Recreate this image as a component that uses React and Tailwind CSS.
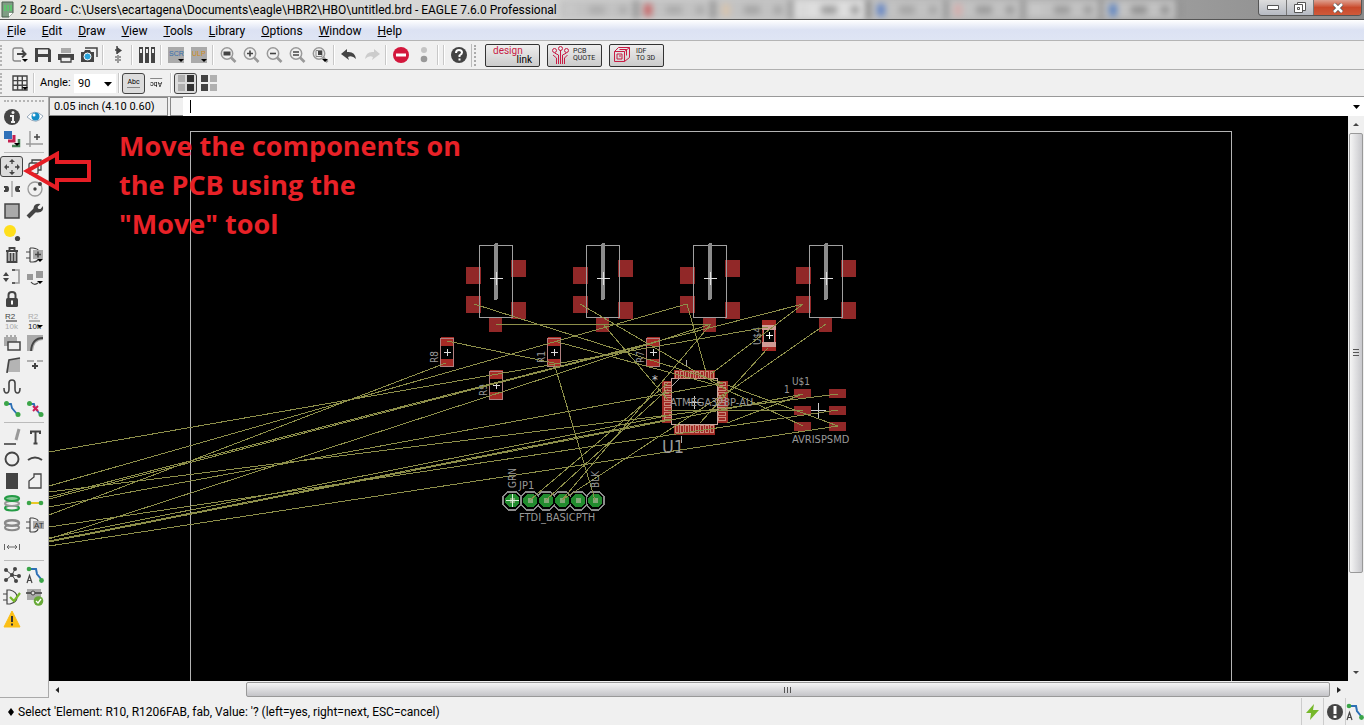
import React from "react";

const INK = "#444";

function Icon({ children, size = 18 }) {
  return (
    <svg width={size} height={size} viewBox="0 0 18 18" fill="none" stroke={INK} strokeWidth="1.6" className="shrink-0 overflow-visible" aria-hidden="true">
      {children}
    </svg>
  );
}

const Drop = () => <path d="M11 13h6l-3 3z" fill="#000" stroke="none" />;

const Lens = ({ children }) => (
  <Icon>
    <circle cx="8" cy="7.500" r="5.700" stroke="#999" strokeWidth="1.500" />
    <path d="M12 11.500l4.500 4.500" stroke="#999" strokeWidth="2.600" />
    {children}
  </Icon>
);

const Nodes = ({ children }) => (
  <Icon>
    <path d="M3 4h5l1 4 5 6" stroke="#2c6fb5" strokeWidth="1.800" />
    <circle cx="3.500" cy="3.500" r="2.500" fill="#3ba548" stroke="none" />
    <circle cx="15" cy="14.500" r="2.500" fill="#3ba548" stroke="none" />
    {children}
  </Icon>
);

const RouteA = () => (
  <Icon>
    <path d="M3 3h7l1 5 4 5" stroke="#2c6fb5" strokeWidth="2" />
    <circle cx="3" cy="3" r="2.300" fill="#3ba548" stroke="none" />
    <circle cx="15.500" cy="14.500" r="2.400" fill="#3ba548" stroke="none" />
    <path d="M1 17L3.500 9.500 6 17M2 14.500h3" strokeWidth="1.200" />
  </Icon>
);

const I = {
  open: <Icon><path d="M12 5V4q0-2-2-2H4Q2 2 2 4v9q0 2 2 2h6" stroke="#888" strokeWidth="1.300" /><path d="M6 8h8M11 4.500L14.500 8 11 11.500" strokeWidth="2" /><Drop /></Icon>,
  save: <Icon><path d="M1 2h14l2 2v12H1z" fill={INK} stroke="none" /><path d="M4 3.500h10V8H4zM4 11h10v5H4z" fill="#eee" stroke="none" /></Icon>,
  print: <Icon><path d="M4 2h10v5H4z" fill="#aaa" stroke="none" /><path d="M1 8h16v6H1z" fill={INK} stroke="none" /><path d="M4 11h10v5H4z" fill="#eee" strokeWidth="1.300" /></Icon>,
  cam: <Icon><path d="M5 2h12v9" strokeWidth="1.500" /><path d="M1 6h3l1-2h5l1 2h3v10H1z" fill={INK} stroke="none" /><circle cx="7.500" cy="10.500" r="3.500" fill="#2aa5dc" stroke="#fff" strokeWidth="1" /></Icon>,
  sch: <Icon><path d="M8 0v8M6 4h3" strokeWidth="1.500" /><path d="M8 1l5 3.500L8 8z" fill={INK} stroke="none" /><path d="M9 9v8M6 11h6M6 14h6" stroke="#999" strokeWidth="2" /></Icon>,
  lib: <Icon>{[1, 7, 13].map((x) => <g key={x}><path d={`M${x} 1h4v16h-4z`} fill={INK} stroke="none" /><path d={`M${x + 1} 3h2v4h-2z`} fill="#eee" stroke="none" /></g>)}</Icon>,
  scr: <Icon><path d="M1 1h16v16H1z" fill="#aaa" stroke="none" /><text x="2" y="10" fontSize="7" fill="#3670ad" stroke="none" fontFamily="Liberation Sans, sans-serif">SCR</text><Drop /></Icon>,
  ulp: <Icon><path d="M1 1h16v16H1z" fill="#aaa" stroke="none" /><text x="2" y="10" fontSize="7" fill="#d08a20" stroke="none" fontFamily="Liberation Sans, sans-serif">ULP</text><Drop /></Icon>,
  fit: <Lens><path d="M4.500 5.500h7v4h-7z" fill={INK} stroke="none" /></Lens>,
  plus: <Lens><path d="M5 7.500h6M8 4.500v6" /></Lens>,
  minus: <Lens><path d="M5 7.500h6" /></Lens>,
  redraw: <Lens><path d="M5 6h6M5 9h6" strokeWidth="1.300" /></Lens>,
  select: <Lens><path d="M5 4.500h6v6H5z" stroke="#888" strokeWidth="1" /><path d="M7 5h4v4H7z" fill={INK} stroke="none" /><Drop /></Lens>,
  undo: <Icon><path d="M1 8l6-5v3q8-1 9 7-4-4-8-2l1 3z" fill={INK} stroke="none" /></Icon>,
  redo: <Icon><path d="M17 8l-6-5v3q-8-1-9 7 4-4 8-2l-1 3z" fill="#ccc" stroke="none" /></Icon>,
  stop: <Icon><circle cx="9" cy="9" r="8" fill="#d3173c" stroke="none" /><path d="M4 9h10" stroke="#fff" strokeWidth="3" /></Icon>,
  go: <Icon><circle cx="9" cy="4" r="3" fill="#c4c4c4" stroke="none" /><circle cx="9" cy="13" r="3.300" fill="#999" stroke="none" /></Icon>,
  help: <Icon><circle cx="9" cy="9" r="8" fill={INK} stroke="none" /><path d="M6 7q0-3 3-3t3 2.500Q12 8 9.500 9.500V11M9.500 12.500v2" stroke="#fff" strokeWidth="2" /></Icon>,
  grid: <Icon><path d="M2 2h14v14H2zM2 6.600h14M2 11.300h14M6.600 2v14M11.300 2v14" strokeWidth="1.400" /><Drop /></Icon>,
  info: <Icon><circle cx="9" cy="9" r="8" fill={INK} stroke="none" /><path d="M7 8h3v6M8 14h4" stroke="#eee" strokeWidth="2" /><circle cx="10" cy="4.500" r="1.500" fill="#eee" stroke="none" /></Icon>,
  eye: <Icon><path d="M1 9q7-9 16-1-6 10-16 1z" fill="#fff" stroke="#9ab" strokeWidth="1" /><circle cx="9.500" cy="8.500" r="4" fill="#148ec8" stroke="none" /><circle cx="8" cy="7" r="1.500" fill="#fff" stroke="none" /></Icon>,
  layers: <Icon><path d="M1 1h8v8H1z" fill="#2e70b8" stroke="none" /><path d="M11 5v6H5" stroke="#c4204f" strokeWidth="3" /><path d="M16 9v7H9" stroke="#438254" strokeWidth="2.500" /><Drop /></Icon>,
  mark: <Icon><path d="M4 1v16M0 14h17" stroke="#999" strokeWidth="1.400" /><path d="M8 7h6M11 4v6" strokeWidth="1.500" /></Icon>,
  move: <Icon><path d="M9 1l3 3H6zM9 17l3-3H6zM1 9l3-3v6zM17 9l-3-3v6z" fill={INK} stroke="none" /><path d="M9 4v2M9 12v2M4 9h2M12 9h2" strokeWidth="1.300" /></Icon>,
  copy: <Icon><rect x="3" y="5" width="9" height="11" rx="1.500" strokeWidth="1.300" /><path d="M6 5V2h9v10h-3" strokeWidth="1.300" /></Icon>,
  mirror: <Icon><path d="M9 1v16" stroke="#999" strokeWidth="1.200" /><path d="M1 6h3q2 0 2 3t-2 3H1zM17 6h-3q-2 0-2 3t2 3h3z" fill={INK} stroke="none" /><path d="M0 8h2v2H0zM16 8h2v2h-2z" fill="#eee" stroke="none" /></Icon>,
  rotate: <Icon><circle cx="9" cy="9" r="7" stroke="#999" strokeWidth="1.300" /><circle cx="9" cy="9" r="1.700" fill={INK} stroke="none" /><circle cx="14" cy="4" r="2" fill={INK} stroke="none" /></Icon>,
  group: <Icon><path d="M2 2h14v14H2z" fill="#aaa" strokeWidth="1.500" /></Icon>,
  wrench: <Icon><path d="M2 15l7-7" strokeWidth="4" /><path d="M14.500 2l-3 3 1 2 2 0 2.500-3q1 6-5 6.500Q7 11 7.500 6 8.500 1 14.500 2z" fill={INK} stroke="none" /></Icon>,
  paint: <Icon><circle cx="7" cy="7" r="6" fill="#ffdf1c" stroke="none" /><circle cx="14.500" cy="14.500" r="2.600" fill={INK} stroke="none" /></Icon>,
  trash: <Icon><path d="M3 5h12M6.500 4V2h5v2M4.500 6v10h9V6M7.500 7v8M10.500 7v8" strokeWidth="1.900" /></Icon>,
  add: <Icon><path d="M7 4h10v9H7z" fill="#aaa" stroke="none" /><path d="M4 2h3q5 1 5 2M4 16h3q3 0 5-2M4 2v14M0 6h4M0 12h4" strokeWidth="1.200" /><path d="M9 8.500h6M12 5.500v6" strokeWidth="1.500" /><Drop /></Icon>,
  pin: <Icon><path d="M0 8l3-4 3 4zM0 10l3 4 3-4z" fill={INK} stroke="none" /><path d="M9 2h7v13H9" stroke="#999" /><path d="M9 2h3M9 15h3" /></Icon>,
  replace: <Icon><path d="M1 6h6v6H1zM10 3h7v7h-7z" fill="#999" stroke="none" /><path d="M5 14q3 4 7 1" strokeWidth="1.200" /><Drop /></Icon>,
  lock: <Icon><rect x="3" y="8" width="12" height="9" rx="1.500" fill={INK} stroke="none" /><path d="M5.500 9V5q0-3 3.500-3t3.500 3v4" strokeWidth="2" /><path d="M9 10.500v4" stroke="#fff" strokeWidth="2" /></Icon>,
  name: <Icon><text x="2" y="7" fontSize="8" fill="#444" stroke="none" fontFamily="Liberation Sans, sans-serif">R2</text><path d="M3 9h11" strokeWidth="1.200" /><text x="2" y="17" fontSize="8" fill="#aaa" stroke="none" fontFamily="Liberation Sans, sans-serif">10k</text></Icon>,
  value: <Icon><text x="2" y="7" fontSize="8" fill="#aaa" stroke="none" fontFamily="Liberation Sans, sans-serif">R2</text><path d="M3 9h11" stroke="#888" strokeWidth="1.200" /><text x="2" y="17" fontSize="8" fill="#222" stroke="none" fontFamily="Liberation Sans, sans-serif">10k</text><Drop /></Icon>,
  smash: <Icon><path d="M1 3h2V1h2v2h2V1h2v2h2V1h2v2h1v9H1z" fill="#aaa" stroke="none" /><path d="M5 8h12v8H5z" fill="#eee" strokeWidth="1.500" /></Icon>,
  miter: <Icon><path d="M1 1h16v5Q8 6 7 17H1z" fill="#aaa" stroke="none" /><path d="M5 17Q6 4 17 4" strokeWidth="1.800" /></Icon>,
  split: <Icon><path d="M5 4l12-2v14H3z" fill="#b4b4b4" stroke="none" /><path d="M4 17L6 4l11-2" strokeWidth="1.600" /></Icon>,
  opt: <Icon><path d="M1 5h7M11 5h6" stroke="#999" strokeWidth="1.300" /><path d="M9 7v6M6 10h6" strokeWidth="2" /></Icon>,
  meander: <Icon><path d="M1 10q0 5 2.500 5T6 11V5q0-3 3-3t3 3v6q0 4 2.500 4T17 10" strokeWidth="1.600" /></Icon>,
  route: <Nodes />,
  ripup: <Nodes><path d="M7 6l5 5M12 6l-5 5" stroke="#d01f57" strokeWidth="2" /></Nodes>,
  wire: <Icon><path d="M1 16h12" strokeWidth="1.600" /><path d="M16 1l-3 11" stroke="#999" strokeWidth="3" /></Icon>,
  text: <Icon><path d="M5 6V3.500h9V6M9.500 3v13M7.500 15.500h4" strokeWidth="2" /></Icon>,
  circle: <Icon><circle cx="9" cy="9" r="6.500" strokeWidth="1.900" /></Icon>,
  arc: <Icon><path d="M2 10q7-5 14 0" strokeWidth="2" /></Icon>,
  rect: <Icon><path d="M3 1h12v16H3z" fill={INK} stroke="none" /></Icon>,
  poly: <Icon><path d="M3 16h12V2H8v3L3 9z" strokeWidth="1.300" /></Icon>,
  via: <Icon><ellipse cx="9" cy="14" rx="7" ry="2.500" stroke="#249b45" strokeWidth="2" /><ellipse cx="9" cy="9.500" rx="7" ry="2.500" stroke="#999" strokeWidth="2" fill="#eee" /><ellipse cx="9" cy="4.500" rx="7" ry="2.500" stroke="#249b45" strokeWidth="2.200" fill="#8cc89a" /></Icon>,
  signal: <Icon><path d="M3 9h12" stroke="#e9c928" strokeWidth="2" /><circle cx="3" cy="9" r="2.300" fill="#3ba548" stroke="none" /><circle cx="15" cy="9" r="2.300" fill="#3ba548" stroke="none" /></Icon>,
  hole: <Icon><ellipse cx="9" cy="11.500" rx="7" ry="2.800" stroke="#888" strokeWidth="2" /><ellipse cx="9" cy="7" rx="7" ry="2.800" fill="#eee" stroke="#888" strokeWidth="2.400" /></Icon>,
  attr: <Icon><path d="M7 5h11v8H7z" fill="#aaa" stroke="none" /><path d="M4 2h3q5 1 5 3M4 16h3q4 0 5-3M4 2v14M0 6h4M0 12h4" strokeWidth="1.200" /><text x="8" y="12" fontSize="8" fill="#333" stroke="none" fontFamily="Liberation Sans, sans-serif">AT</text></Icon>,
  dim: <Icon><path d="M1.500 6v6M16.500 6v6M4 9h10M6 7L4 9l2 2M12 7l2 2-2 2" stroke="#666" strokeWidth="1" /></Icon>,
  rats: <Icon><path d="M9 9L3 4M9 9l3-6M9 9l7 1M9 9l-6 5M9 9l4 6" strokeWidth="1" />{[[9, 9], [3, 4], [12, 3], [16, 10], [3, 14], [13, 15]].map(([x, y]) => <circle key={`${x}-${y}`} cx={x} cy={y} r="2" fill={INK} stroke="none" />)}</Icon>,
  auto: <RouteA />,
  erc: <Icon><path d="M4 2h3q7 2 7 7t-7 7H4zM0 6h4M0 12h4" strokeWidth="1.200" /><path d="M7 9l4 4 6-8" stroke="#76b82a" strokeWidth="2.200" /></Icon>,
  drc: <Icon><path d="M1 1h14v11H1z" fill="#aaa" stroke="none" /><path d="M0 5h16" /><circle cx="7" cy="5" r="2" fill="#ddd" strokeWidth="1" /><circle cx="12.500" cy="13" r="4.800" fill="#67a937" stroke="none" /><path d="M10 13l2 2 3-4" stroke="#fff" strokeWidth="1.300" /></Icon>,
  errors: <Icon><path d="M9 1l8 16H1z" fill="#fbbf16" stroke="#fbbf16" strokeWidth="1" strokeLinejoin="round" /><path d="M9 6v6M9 13.500v2" strokeWidth="2" stroke="#333" /></Icon>,
};

function ToolButton({ name, pressed, children }) {
  return (
    <button
      type="button"
      aria-label={name}
      aria-pressed={pressed}
      className={
        pressed
          ? "flex h-[21px] w-[23px] shrink-0 items-center justify-center rounded-[3px] border border-[#444] bg-[#dcdcdc]"
          : "flex h-[22px] w-[23px] shrink-0 items-center justify-center"
      }
    >
      {children ?? I[name]}
    </button>
  );
}

const Sep = () => <div className="mx-[2px] h-5 w-[2px] shrink-0 border-l border-[#c8c8c8] bg-white" />;
const Grip = () => <div className="mr-1 h-[21px] w-1 shrink-0 border-l-2 border-dotted border-[#b5b5b5]" />;

const TOOLBAR = [
  "open", "save", "print", "cam", "|", "sch", "|", "lib", "|", "scr", "ulp", "|",
  "fit", "plus", "minus", "redraw", "select", "|", "undo", "redo", "|", "stop", "go", "|", "|", "help",
];

const PALETTE = [
  ["info", "eye", "layers", "mark"],
  ["move", "copy", "mirror", "rotate", "group", "wrench", "paint", null, "trash", "add", "pin", "replace", "lock", null, "name", "value", "smash", "miter", "split", "opt", "meander", null, "route", "ripup"],
  ["wire", "text", "circle", "arc", "rect", "poly", "via", "signal", "hole", "attr", "dim", null],
  ["rats", "auto", "erc", "drc", "errors", null],
];

const MENUS = ["File", "Edit", "Draw", "View", "Tools", "Library", "Options", "Window", "Help"];

const AIRWIRES = [
  [49, 452, 768, 327], [49, 515, 446, 363], [49, 486, 687, 304], [49, 497, 803, 304], [49, 499, 653, 343],
  [49, 539, 711, 324], [49, 492, 838, 394], [49, 507, 723, 383], [49, 527, 838, 410], [49, 538, 666, 416],
  [49, 541, 670, 419], [49, 542, 803, 394], [49, 546, 838, 426], [496, 324, 711, 324], [474, 304, 723, 383],
  [580, 304, 727, 390], [603, 324, 668, 400], [447, 341, 554, 363], [554, 341, 723, 387], [554, 363, 595, 500],
  [687, 304, 706, 372], [803, 304, 711, 374], [826, 324, 727, 393], [768, 348, 700, 423], [530, 500, 668, 383],
  [546, 500, 668, 389], [562, 500, 711, 324], [562, 500, 727, 392], [727, 390, 803, 426], [727, 385, 838, 426],
  [668, 410, 803, 410], [727, 423, 803, 394],
];

function Sensor({ x }) {
  return (
    <g>
      <g fill="#912828">
        <path d={`M${x - 30} 267h15v17h-15zM${x - 30} 296h15v17h-15zM${x + 15} 260h15v17h-15zM${x + 15} 302h15v17h-15zM${x - 7} 318h13v14h-13z`} />
      </g>
      <rect x={x - 16.5} y="245.5" width="33" height="72" stroke="#a0a0a0" />
      <path d={`M${x} 245v53`} stroke="#8c8c8c" strokeWidth="4" strokeLinecap="round" />
      <path d={`M${x - 6} 278.500h13M${x + 0.5} 272v13`} stroke="#e0e0e0" />
    </g>
  );
}

function Resistor({ x, y, label }) {
  return (
    <g>
      <path d={`M${x - 6} ${y - 15}h13v9h-13zM${x - 6} ${y + 7}h13v8h-13z`} fill="#a62a25" />
      <rect x={x - 6.5} y={y - 13.5} width="13" height="28" stroke="#b08080" />
      <path d={`M${x - 3} ${y + 0.5}h7M${x + 0.5} ${y - 3}v7`} stroke="#ddd" />
      <text transform={`translate(${x - 9} ${y + 11}) rotate(-90)`} fontSize="10" fill="#999">{label}</text>
    </g>
  );
}

const PINS = [0, 1, 2, 3, 4, 5, 6, 7];
const HEADER = [512, 530, 546, 562, 578, 595];

function Board() {
  return (
    <svg width="1299" height="565" viewBox="49 116 1299 565" fill="none" shapeRendering="crispEdges" fontFamily="'DejaVu Sans Condensed', 'DejaVu Sans', sans-serif" role="img" aria-label="Board layout">
      <path d="M190.500 700V131.500h1041V700" stroke="#b4b4b4" />
      {[496, 603, 710, 826].map((x) => <Sensor key={x} x={x} />)}
      <Resistor x={447} y={352} label="R8" />
      <Resistor x={554} y={352} label="R1" />
      <Resistor x={653} y={352} label="R7" />
      <Resistor x={496} y={385} label="R9" />
      <g>
        <path d="M762 320h14v31h-14z" fill="#a62a25" />
        <path d="M763.500 328v17h11v-17z" fill="#000" stroke="#c08080" />
        <path d="M762 325h14v5h-14zM762 342h14v5h-14z" fill="#d09c96" />
        <path d="M766 335.500h7M769.500 332v7" stroke="#fff" />
        <text transform="translate(761 345) rotate(-90)" fontSize="10" fill="#999">U$4</text>
      </g>
      <path d="M674 370h41v9h-41zM674 424h41v11h-41zM662 381h10v42h-10zM717 381h11v42h-11z" fill="#a02a25" />
      <rect x="671.5" y="378.5" width="46" height="46" stroke="#c8a8a0" />
      <g stroke="#c98878">
        {PINS.map((i) => (
          <path key={i} d={`M${675.5 + i * 5} 371.500h3v7h-3zM${675.5 + i * 5} 425.500h3v7h-3zM664.500 ${382.5 + i * 5}h7v3h-7zM718.500 ${382.5 + i * 5}h7v3h-7z`} />
        ))}
        <path d="M672 386l8-8M686.500 360v7M681.500 436v7" stroke="#aaa" />
      </g>
      <g fill="#912828">
        {[389, 406, 422].map((y) => <path key={y} d={`M794 ${y}h17v9h-17zM829 ${y}h17v9h-17z`} />)}
      </g>
      <path d="M811 410.500h15M818.500 403v15M688 402.500h13M694.500 396v13" stroke="#ccc" />
      {HEADER.map((x) => (
        <path key={x} d={`M${x - 4} 491.500h8l5 5v8l-5 5h-8l-5-5v-8z`} stroke="#8c8c8c" strokeWidth="2" />
      ))}
      {HEADER.map((x) => (
        <g key={x}>
          <path d={`M${x - 4} 493h8l4 4v7l-4 4h-8l-4-4v-7z`} fill="#000" />
          <path d={`M${x - 3} 494h6l4 4v5l-4 4h-6l-4-4v-5z`} fill="#218b2e" />
          <path d={`M${x - 2} 498h5v5h-5z`} fill="#83a778" />
        </g>
      ))}
      <path d="M506 500.500h13M512.500 494v13" stroke="#d8f0d8" />
      <g stroke="#8d8f4a" strokeWidth="1">
        {AIRWIRES.map(([a, b, c, d], i) => <path key={i} d={`M${a} ${b}L${c} ${d}`} />)}
      </g>
      <g fill="#999" fontSize="11">
        <text x="670" y="406">ATMEGA328P-AU</text>
        <text x="662" y="453" fontSize="18">U1</text>
        <text x="792" y="385" fontSize="10">U$1</text>
        <text x="784" y="393" fontSize="10">1</text>
        <text x="792" y="443">AVRISPSMD</text>
        <text x="519" y="489" fontSize="11">JP1</text>
        <text x="519" y="521">FTDI_BASICPTH</text>
        <text transform="translate(516 488) rotate(-90)" fontSize="10">GRN</text>
        <text transform="translate(599 488) rotate(-90)" fontSize="10">BLK</text>
        <text x="652" y="384" fontSize="13" fill="#ccc">*</text>
      </g>
    </svg>
  );
}

const TABS = [
  ["#c8c8c8", "#adadad"],
  ["#c9696a", "#aaaaaa"],
  ["#d8c4ae", "#a4a4a4"],
  ["#d8d8d8", "#9c9c9c"],
  ["#6485c4", "#a4a4a4"],
  ["#d4aeac", "#999999"],
  ["#c9c9c9", "#9a9a9a"],
  ["#5f84bf", "#909090"],
];

function TitleBar() {
  return (
    <header className="relative flex h-5 shrink-0 items-center overflow-hidden border-b border-[#555] bg-linear-to-r from-[#e6e7e2] via-[#cdcdcd] to-[#8a8a8a]">
      <div className="absolute inset-y-0 right-[184px] left-[560px] flex blur-[3px]" aria-hidden="true">
        {TABS.map(([mark, label], i) => (
          <div key={i} className={i === 3 ? "flex flex-1 items-center justify-around border-r-4 border-[#707070] bg-[#dedede]" : "flex flex-1 items-center justify-around border-r-4 border-[#8a8a8a] bg-[#c2c2c2]"}>
            <i className="h-3 w-2" style={{ background: mark }} />
            <i className="h-2 w-4" style={{ background: label }} />
            <i className="h-2 w-2" style={{ background: label }} />
          </div>
        ))}
      </div>
      <svg width="14" height="18" viewBox="0 0 14 18" className="ml-px shrink-0" aria-hidden="true">
        <path d="M1 1h11v11l-4 4H1z" fill="#7f9d84" stroke="#4a5f4e" />
        <path d="M3 4h2v6H3zM6 4h2v6H6zM9 4h2v6H9z" fill="#5fc36e" />
        <path d="M12 12H8v4z" fill="#fff" />
      </svg>
      <h1 className="relative ml-[5px] text-[12px] leading-4 whitespace-nowrap text-black">2 Board - C:\Users\ecartagena\Documents\eagle\HBR2\HBO\untitled.brd - EAGLE 7.6.0 Professional</h1>
      <div className="relative mr-[2px] ml-auto flex h-4 self-start overflow-hidden rounded-b-[4px] border border-t-0 border-[#555]">
        <button type="button" aria-label="Minimize" className="flex w-7 items-center justify-center border-r border-[#777] bg-linear-to-b from-[#ddd] to-[#b5b9c2]">
          <svg width="12" height="5"><path d="M.5.5h11v4H.5z" fill="#fff" stroke="#555" /></svg>
        </button>
        <button type="button" aria-label="Restore" className="flex w-[27px] items-center justify-center border-r border-[#777] bg-linear-to-b from-[#ddd] to-[#b5b9c2]">
          <svg width="13" height="12" fill="#fff" stroke="#555"><path d="M3.500.5h8v8h-8z" /><path d="M.5 2.500h8v8h-8z" /><path d="M3.500 5.500h2v2h-2z" /></svg>
        </button>
        <button type="button" aria-label="Close" className="flex w-[47px] items-center justify-center bg-linear-to-b from-[#dda090] via-[#c9492b] to-[#cf5a3a]">
          <svg width="12" height="10"><path d="M2 1l8 8M10 1L2 9" stroke="#555" strokeWidth="4" /><path d="M2 1l8 8M10 1L2 9" stroke="#fff" strokeWidth="2.500" /></svg>
        </button>
      </div>
    </header>
  );
}

const VENDOR = "flex h-[23px] w-[55px] items-center rounded-[2px] border border-[#333] bg-linear-to-b from-[#eee] to-[#ccc]";

function MainToolbar() {
  return (
    <div className="flex h-[29px] shrink-0 items-center border-b border-[#b0b0b0]">
      <div className="flex items-center">
        <Grip />
        <div className="flex items-center">
          {TOOLBAR.map((n, i) => (n === "|" ? <Sep key={i} /> : <ToolButton key={n} name={n} />))}
        </div>
      </div>
      <div className="ml-px flex items-center gap-[7px] border-l border-[#bbb] pl-[2px]">
        <div className="h-[21px] w-1 border-l-2 border-dotted border-[#aaa]" />
        <button type="button" aria-label="designlink" className={VENDOR}>
          <span className="flex w-full flex-col px-[7px] text-[10px] leading-[9px]">
            <span className="self-start text-[#c81c45]">design</span>
            <span className="self-end text-black">link</span>
          </span>
        </button>
        <button type="button" className={`${VENDOR} gap-1 pl-1`}>
          <svg width="17" height="18" fill="none" stroke="#c81c45" aria-hidden="true"><path d="M6.500 18V9L2.500 7M8.500 18V4M10.500 18V9l4-2M4.500 18v-6L1 9M12.500 18v-6l3-3" /><circle cx="2.500" cy="4.500" r="2" /><circle cx="8.500" cy="2.500" r="2" /><circle cx="14.500" cy="4.500" r="2" /></svg>
          <span className="text-left text-[7px] leading-[7px] text-[#222]">PCB<br />QUOTE</span>
        </button>
        <button type="button" className={`${VENDOR} gap-[6px] pl-1`}>
          <svg width="16" height="16" fill="none" stroke="#c81c45" aria-hidden="true"><path d="M.5 4.500h10v10H.5zM.5 4.500l4-4h11v10l-5 4M10.500 4.500l5-4M3 7h5v5H3zM5 9h2M5.500 2.500h7v6" /></svg>
          <span className="text-left text-[7px] leading-[7px] text-[#222]">IDF<br />TO 3D</span>
        </button>
      </div>
    </div>
  );
}

function ParamBar() {
  return (
    <div className="flex h-[27px] shrink-0 items-center border-b border-[#999]">
      <Grip />
      <ToolButton name="grid" />
      <Sep />
      <label htmlFor="angle" className="ml-[3px] w-[34px] text-[11px] leading-4">Angle:</label>
      <div className="relative h-[19px] w-[42px]">
        <select id="angle" defaultValue="90" className="block h-[19px] w-full appearance-none bg-white py-0 pl-1 text-[11px] leading-[19px]">
          <option>90</option>
        </select>
        <svg width="8" height="5" className="pointer-events-none absolute top-2 right-1" aria-hidden="true"><path d="M0 0h8L4 4.500z" /></svg>
      </div>
      <Sep />
      <ToolButton name="Normal text" pressed>
        <span className="border-b border-[#888] text-[7px] leading-[9px]">Abc</span>
      </ToolButton>
      <ToolButton name="Mirrored text">
        <span className="rotate-180 border-b border-[#888] text-[7px] leading-[9px]">Abc</span>
      </ToolButton>
      <Sep />
      <ToolButton name="Top side" pressed>
        <Icon><path d="M1 1h7v7H1zM1 10h7v7H1z" fill="#b0b0b0" stroke="none" /><path d="M10 1h7v7h-7zM10 10h7v7h-7z" fill="#333" stroke="none" /></Icon>
      </ToolButton>
      <ToolButton name="Bottom side">
        <Icon><path d="M1 1h7v7H1zM1 10h7v7H1z" fill="#444" stroke="none" /><path d="M10 1h7v7h-7zM10 10h7v7h-7z" fill="#b0b0b0" stroke="none" /></Icon>
      </ToolButton>
    </div>
  );
}

function Palette() {
  return (
    <nav className="flex w-[49px] shrink-0 flex-col border-r border-b border-[#aaa]" aria-label="Tools">
      <div className="mx-1 mt-[3px] mb-1 h-[2px] shrink-0 border-t-2 border-dotted border-[#b5b5b5]" />
      {PALETTE.map((group, g) => (
        <React.Fragment key={g}>
          {g > 0 && <div className="mx-1 my-[2px] h-[2px] shrink-0 border-t border-[#bbb]" />}
          <div className="grid w-[46px] grid-cols-2">
            {group.map((n, i) => (n ? <ToolButton key={n} name={n} pressed={n === "move" ? true : undefined} /> : <span key={i} className="h-[22px]" />))}
          </div>
        </React.Fragment>
      ))}
    </nav>
  );
}

export default function App() {
  return (
    <div className="flex h-screen flex-col overflow-hidden bg-[#f0f0f0] text-black" style={{ fontFamily: "Roboto, 'Open Sans', sans-serif" }}>
      <TitleBar />
      <nav className="flex h-[21px] shrink-0 items-center gap-4 border-b border-[#b5b5b5] bg-linear-to-b from-white via-[#dce2f3] to-[#dfe5f4] pt-px pl-[7px]" aria-label="Menu">
        {MENUS.map((m) => (
          <button key={m} type="button" className="text-[12px] leading-4">
            <u>{m[0]}</u>{m.slice(1)}
          </button>
        ))}
      </nav>
      <MainToolbar />
      <ParamBar />
      <div className="relative flex min-h-0 flex-1">
        <Palette />
        <main className="flex min-w-0 flex-1 flex-col">
          <div className="flex h-[19px] shrink-0 items-stretch bg-[#f0f0f0]">
            <output className="flex w-[119px] items-center border border-[#888] bg-[#eee] pl-[4px] text-[11px] leading-4 whitespace-nowrap">0.05 inch (4.10 0.60)</output>
            <div className="ml-[2px] w-[13px] border border-r-0 border-[#888]" />
            <div className="flex min-w-0 flex-1 items-center bg-white pr-1 pl-[7px]">
              <span className="h-[13px] w-px bg-black" />
              <input aria-label="Command" className="min-w-0 flex-1 text-[11px] outline-none" />
              <svg width="7" height="4" aria-hidden="true"><path d="M0 0h7L3.500 4z" /></svg>
            </div>
          </div>
          <div className="flex min-h-0 flex-1">
            <div className="relative min-w-0 flex-1 overflow-hidden bg-black">
              <Board />
              <p className="absolute top-[10px] left-[70px] text-[27px] leading-[39px] font-bold whitespace-nowrap text-[#e82127]" style={{ fontFamily: "'Open Sans', sans-serif" }}>
                Move the components on<br />the PCB using the<br />"Move" tool
              </p>
            </div>
            <div className="flex w-4 shrink-0 flex-col items-center bg-[#f0f0f0]">
              <svg width="16" height="17" aria-hidden="true"><path d="M5 10h6L8 7z" fill="#444" /></svg>
              <div className="flex w-[14px] flex-[440] items-center justify-center rounded-[2px] border border-[#999] bg-linear-to-r from-[#f5f5f5] to-[#c8c8cc]">
                <svg width="6" height="8" aria-hidden="true"><path d="M0 .5h6M0 3.500h6M0 6.500h6" stroke="#555" /></svg>
              </div>
              <div className="flex-[91]" />
              <svg width="16" height="17" aria-hidden="true"><path d="M5 7h6l-3 3z" fill="#444" /></svg>
            </div>
          </div>
          <div className="flex h-[17px] shrink-0 items-center">
            <svg width="16" height="16" aria-hidden="true"><path d="M10 5v6L6.500 8z" fill="#222" /></svg>
            <div className="flex-[181]" />
            <div className="flex h-[15px] flex-[1084] items-center justify-center rounded-[2px] border border-[#999] bg-linear-to-b from-[#f5f5f5] to-[#c4c4c8]">
              <svg width="8" height="6" aria-hidden="true"><path d="M.5 0v6M3.500 0v6M6.500 0v6" stroke="#555" /></svg>
            </div>
            <svg width="18" height="16" className="mr-4" aria-hidden="true"><path d="M7 5v6l4-3z" fill="#222" /></svg>
          </div>
        </main>
        <svg width="70" height="40" viewBox="0 0 70 40" className="pointer-events-none absolute top-[54px] left-[23px]" fill="none" aria-hidden="true">
          <path d="M4 20L34 3v8h32v18H34v8z" stroke="#e61e25" strokeWidth="4" />
        </svg>
      </div>
      <footer className="flex h-[27px] shrink-0 items-center pl-[7px] text-[12px] leading-4">
        <svg width="8" height="8" aria-hidden="true"><path d="M4 0l3 4-3 4-3-4z" /></svg>
        <span className="ml-[3px]">Select 'Element: R10, R1206FAB, fab, Value: '? (left=yes, right=next, ESC=cancel)</span>
        <div className="ml-auto flex h-full items-center">
          <span className="flex h-full w-[22px] items-center justify-center border-l border-[#ccc]">
            <Icon size={18}><path d="M10 1L2 10h5l-1 7 9-10h-6z" fill="#76b82a" stroke="none" /></Icon>
          </span>
          <span className="flex h-full w-[22px] items-center justify-center border-l border-[#ccc]">
            <Icon><circle cx="9" cy="9" r="8" fill={INK} stroke="none" /><path d="M9 3v8M9 12.500V15" stroke="#fff" strokeWidth="3" /></Icon>
          </span>
          <span className="flex h-full w-[19px] items-center justify-center border-l border-[#ccc]"><RouteA /></span>
        </div>
      </footer>
    </div>
  );
}
